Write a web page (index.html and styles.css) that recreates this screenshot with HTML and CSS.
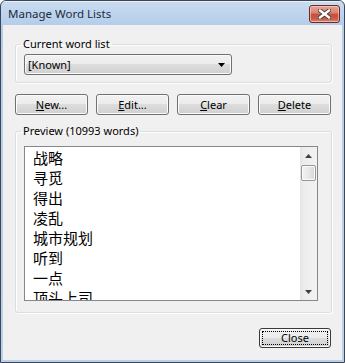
FILE: index.html
```html
<!DOCTYPE html>
<html>
<head>
<meta charset="utf-8">
<link rel="stylesheet" href="styles.css">
</head>
<body>
<div class="window">
  <div class="titlebar">
    <span class="title">Manage Word Lists</span>
    <div class="close-x">
      <svg width="13" height="10" viewBox="0 0 13 10">
        <path d="M2 1.5 L11 8.5 M11 1.5 L2 8.5" stroke="#3b3b3b" stroke-width="4.2" stroke-linecap="square"/>
        <path d="M2 1.5 L11 8.5 M11 1.5 L2 8.5" stroke="#ffffff" stroke-width="2.4" stroke-linecap="square"/>
      </svg>
    </div>
  </div>
  <div class="client">
    <fieldset class="group group-current">
      <legend>Current word list</legend>
      <div class="combo">
        <span class="combo-text">[Known]</span>
        <svg class="combo-arrow" width="7" height="4" viewBox="0 0 7 4"><path d="M0 0 H7 L3.5 4 Z" fill="#000"/></svg>
      </div>
    </fieldset>
    <div class="btn-row">
      <button class="btn"><u>N</u>ew...</button>
      <button class="btn"><u>E</u>dit...</button>
      <button class="btn"><u>C</u>lear</button>
      <button class="btn"><u>D</u>elete</button>
    </div>
    <fieldset class="group group-preview">
      <legend>Preview (10993 words)</legend>
      <div class="listbox">
        <div class="items">
          <div class="item">战略</div>
          <div class="item">寻觅</div>
          <div class="item">得出</div>
          <div class="item">凌乱</div>
          <div class="item">城市规划</div>
          <div class="item">听到</div>
          <div class="item">一点</div>
          <div class="item">顶头上司</div>
        </div>
        <div class="scrollbar">
          <div class="sb-btn">
            <svg width="7" height="4" viewBox="0 0 7 4"><path d="M0 4 H7 L3.5 0 Z" fill="#404040"/></svg>
          </div>
          <div class="thumb"></div>
          <div class="track"></div>
          <div class="sb-btn">
            <svg width="7" height="4" viewBox="0 0 7 4"><path d="M0 0 H7 L3.5 4 Z" fill="#404040"/></svg>
          </div>
        </div>
      </div>
    </fieldset>
    <div class="footer">
      <button class="btn btn-default"><span class="focus">Close</span></button>
    </div>
  </div>
</div>
</body>
</html>
```
FILE: styles.css
```css
html, body {
  margin: 0;
  padding: 0;
  background: #ffffff;
}

.window {
  width: 345px;
  height: 363px;
  box-sizing: border-box;
  border: 1px solid #3e4656;
  border-radius: 6px 6px 0 0;
  background: linear-gradient(to bottom, #c9dcf1 0px, #b4cde9 24px, #b9d1ec 100%);
  display: flex;
  flex-direction: column;
  font-family: "Noto Sans", sans-serif;
  font-size: 11px;
  color: #000;
  overflow: hidden;
}

.titlebar {
  height: 24px;
  flex: none;
  display: flex;
  align-items: flex-start;
  justify-content: space-between;
  padding: 0 4px 0 7px;
  box-shadow: inset 0 1px 0 rgba(255,255,255,0.6);
}

.title {
  margin-top: 5px;
  line-height: 16px;
  font-size: 11.5px;
  color: #1b2a3d;
}

.close-x {
  margin-top: 4px;
  width: 31px;
  height: 18px;
  box-sizing: border-box;
  border: 1px solid #6e2a22;
  border-radius: 3px;
  background: linear-gradient(to bottom, #e8a595 0%, #d88170 45%, #c4513c 50%, #c95a45 80%, #dd8d78 100%);
  box-shadow: inset 0 0 0 1px rgba(255,220,210,0.55);
  display: flex;
  align-items: center;
  justify-content: center;
}

.client {
  flex: 1;
  margin: 0 2px 2px 2px;
  background: #f0f0f0;
  display: flex;
  flex-direction: column;
}

.group {
  margin: 0 10px 0 12px;
  border: 1px solid #d5dfe5;
  border-radius: 3px;
  box-shadow: inset 1px 1px 0 #ffffff, 1px 1px 0 #ffffff;
  min-width: 0;
}

.group legend {
  margin-left: -3px;
  padding: 0 2px;
  line-height: 16px;
  font-size: 11px;
}

.group-current {
  margin-top: 11px;
  padding: 0 13px 7px 8px;
}

.combo {
  margin-top: 2px;
  width: 208px;
  height: 21px;
  box-sizing: border-box;
  border: 1px solid #707070;
  border-radius: 3px;
  background: linear-gradient(to bottom, #f2f2f2 0%, #ebebeb 50%, #dddddd 50%, #cfcfcf 100%);
  box-shadow: inset 0 0 0 1px #fbfbfb;
  display: flex;
  align-items: center;
  justify-content: space-between;
  padding: 0 6px 0 3px;
}

.combo-text {
  line-height: 16px;
}

.btn-row {
  margin: 11px 10px 0 12px;
  display: flex;
  gap: 8px;
}

.btn {
  width: 73px;
  height: 21px;
  box-sizing: border-box;
  border: 1px solid #707070;
  border-radius: 3px;
  background: linear-gradient(to bottom, #f2f2f2 0%, #ebebeb 50%, #dddddd 50%, #cfcfcf 100%);
  box-shadow: inset 0 0 0 1px #fbfbfb;
  font-family: "Noto Sans", sans-serif;
  font-size: 11px;
  color: #000;
  padding: 0;
  line-height: 16px;
  display: flex;
  align-items: center;
  justify-content: center;
}

.group-preview {
  margin-top: 8px;
  padding: 0 13px 11px 8px;
}

.listbox {
  margin-top: 7px;
  width: 294px;
  height: 155px;
  box-sizing: border-box;
  border: 1px solid #828790;
  background: #ffffff;
  display: flex;
  overflow: hidden;
}

.items {
  flex: 1;
  padding: 1px 0 0 8px;
  overflow: hidden;
}

.item {
  height: 20px;
  line-height: 20px;
  font-family: "Noto Sans CJK SC", sans-serif;
  font-size: 15px;
  white-space: nowrap;
}

.scrollbar {
  width: 17px;
  flex: none;
  display: flex;
  flex-direction: column;
  background: linear-gradient(to right, #e3e3e3 0px, #ececec 3px, #f2f2f2 100%);
}

.sb-btn {
  height: 17px;
  flex: none;
  display: flex;
  align-items: center;
  justify-content: center;
}

.thumb {
  height: 16px;
  margin: 1px 1px 0 1px;
  flex: none;
  box-sizing: border-box;
  border: 1px solid #979797;
  border-radius: 2px;
  background: linear-gradient(to right, #f3f3f3 0%, #e8e8e8 50%, #d6d6d6 100%);
  box-shadow: inset 0 0 0 1px #fbfbfb;
}

.track {
  flex: 1;
}

.footer {
  margin-top: 15px;
  padding-right: 11px;
  display: flex;
  justify-content: flex-end;
}

.btn-default {
  width: 72px;
  height: 20px;
  border-color: #3a3a3a;
  position: relative;
}

.btn-default .focus {
  position: absolute;
  inset: 2px;
  border: 1px dotted #000;
  display: flex;
  align-items: center;
  justify-content: center;
}
```
